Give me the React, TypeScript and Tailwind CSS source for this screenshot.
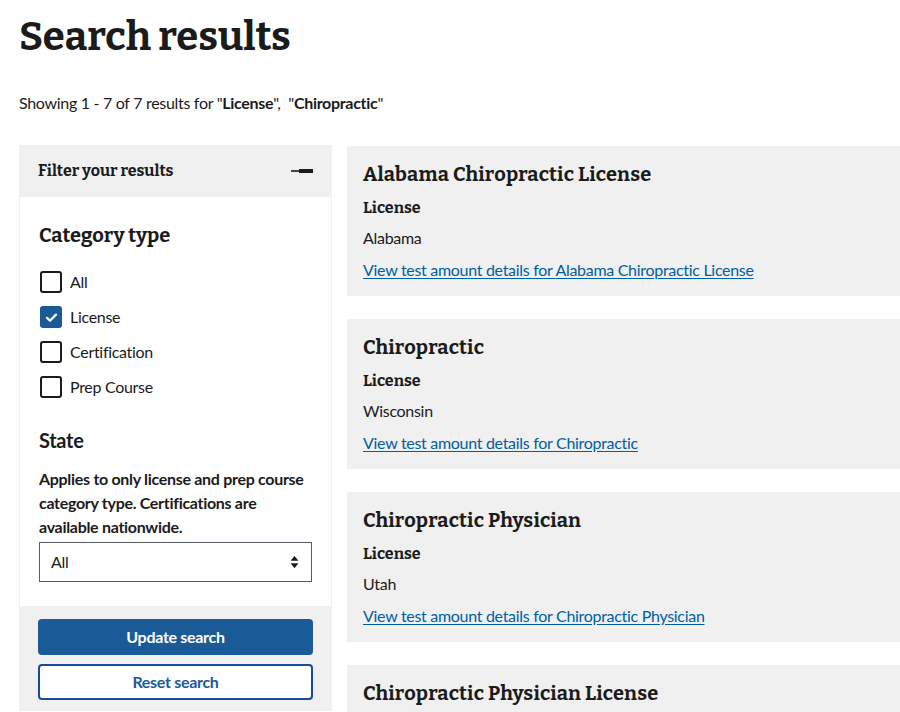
import React from "react";

const serif = "font-['Bitter','DejaVu_Serif',serif]";
const sans = "font-['Source_Sans_Pro','Lato',sans-serif]";

type Result = { title: string; kind: string; state: string };

const results: Result[] = [
  { title: "Alabama Chiropractic License", kind: "License", state: "Alabama" },
  { title: "Chiropractic", kind: "License", state: "Wisconsin" },
  { title: "Chiropractic Physician", kind: "License", state: "Utah" },
  { title: "Chiropractic Physician License", kind: "License", state: "Utah" },
];

const categories = [
  { label: "All", checked: false },
  { label: "License", checked: true },
  { label: "Certification", checked: false },
  { label: "Prep Course", checked: false },
];

function Checkbox({ checked }: { checked: boolean }) {
  if (checked) {
    return (
      <span className="flex h-[22px] w-[22px] shrink-0 items-center justify-center rounded-[3px] bg-[#1a5a96]">
        <svg viewBox="0 0 16 16" className="h-[13px] w-[13px]">
          <path d="M2.5 8.5 L6.2 12 L13.5 4.5" fill="none" stroke="white" strokeWidth="2.8" strokeLinecap="round" strokeLinejoin="round" />
        </svg>
      </span>
    );
  }
  return <span className="h-[22px] w-[22px] shrink-0 rounded-[3px] border-2 border-[#1b1b1b] bg-white" />;
}

function ResultCard({ item }: { item: Result }) {
  return (
    <div className="bg-[#f0f0f0] px-4 pt-4 pb-[14px]">
      <h3 className={`${serif} text-[20px] font-bold leading-[24px] tracking-[0.2px] text-[#1b1b1b]`}>{item.title}</h3>
      <p className={`${serif} mt-[10px] text-[16px] font-bold leading-[24px] tracking-normal text-[#1b1b1b]`}>{item.kind}</p>
      <p className="mt-[6px] text-[16px] leading-[24px] text-[#1b1b1b]">{item.state}</p>
      <a href="#" className="mt-[8px] block text-[16px] leading-[24px] text-[#005ea2] underline underline-offset-2">
        View test amount details for {item.title}
      </a>
    </div>
  );
}

export default function App() {
  return (
    <div className={`${sans} h-[712px] overflow-hidden bg-white pl-[19px] tracking-[-0.3px] text-[#1b1b1b]`}>
      <h1 className={`${serif} pt-[13px] text-[40px] font-bold leading-[48px] tracking-normal`}>Search results</h1>
      <p className="mt-[30px] text-[16px] leading-[24px]">
        Showing 1 - 7 of 7 results for "<b>License</b>", &nbsp;"<b>Chiropractic</b>"
      </p>

      <div className="mt-[30px] flex gap-[15px]">
        <aside className="w-[313px] shrink-0 self-start bg-[#f0f0f0]">
          <div className="flex h-[52px] items-center justify-between pl-[19px] pr-[19px]">
            <span className={`${serif} text-[16px] font-bold tracking-normal`}>Filter your results</span>
            <svg viewBox="0 0 22 6" className="h-[6px] w-[22px]">
              <rect x="0" y="2.2" width="10" height="1.6" fill="#1b1b1b" />
              <rect x="8" y="1" width="14" height="4" rx="0.5" fill="#1b1b1b" />
            </svg>
          </div>

          <div className="mx-px bg-white px-[19px] pt-[26px] pb-[24px]">
            <h2 className={`${serif} text-[20px] font-bold leading-[24px] tracking-normal`}>Category type</h2>
            <div className="mt-[24px] flex flex-col gap-[13px]">
              {categories.map((c) => (
                <label key={c.label} className="flex items-center gap-[8px] pl-px text-[16px] leading-[22px]">
                  <Checkbox checked={c.checked} />
                  <span>{c.label}</span>
                </label>
              ))}
            </div>

            <h2 className="mt-[29px] text-[20px] font-bold leading-[26px]">State</h2>
            <p className="mt-[14px] text-[16px] font-bold leading-[24px]">
              Applies to only license and prep course category type. Certifications are available nationwide.
            </p>
            <div className="mt-[3px] flex h-[40px] items-center justify-between border border-[#565c65] bg-white pl-[11px] pr-[12px] text-[16px]">
              <span>All</span>
              <svg viewBox="0 0 10 16" className="h-[14px] w-[9px]">
                <path d="M5 1 L9.5 6.5 H0.5 Z" fill="#1b1b1b" />
                <path d="M5 15 L9.5 9.5 H0.5 Z" fill="#1b1b1b" />
              </svg>
            </div>
          </div>

          <div className="flex flex-col gap-[9px] px-[19px] pt-[13px] pb-[11px]">
            <button className="h-[36px] rounded-[4px] bg-[#1a5a96] text-[16px] font-bold text-white">Update search</button>
            <button className="h-[36px] rounded-[4px] border-2 border-[#1a4aa0] bg-white text-[16px] font-bold text-[#1a5a96]">
              Reset search
            </button>
          </div>
        </aside>

        <main className="flex min-w-0 flex-1 flex-col gap-[23px] pt-px">
          {results.map((r) => (
            <ResultCard key={r.title} item={r} />
          ))}
        </main>
      </div>
    </div>
  );
}
